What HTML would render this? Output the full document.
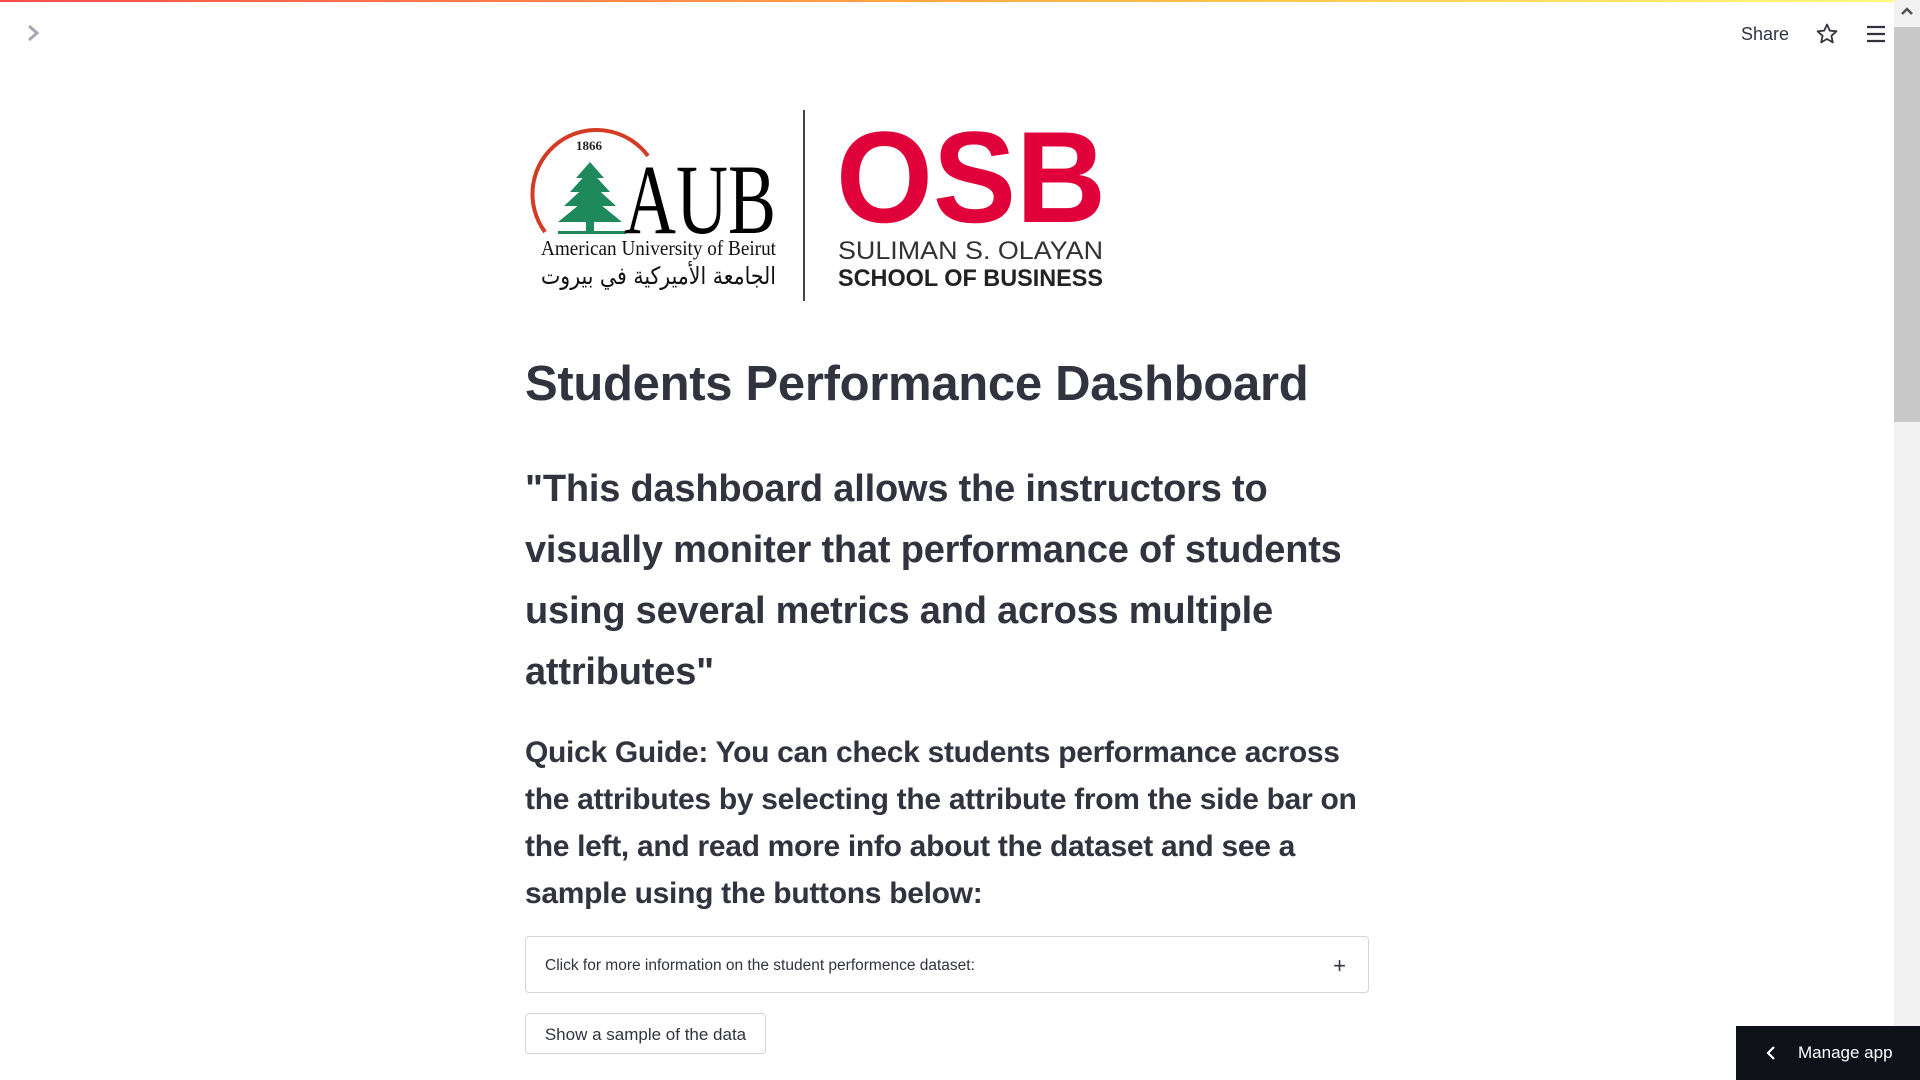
<!DOCTYPE html>
<html><head><meta charset="utf-8"><style>
*{margin:0;padding:0;box-sizing:border-box}
html,body{width:1920px;height:1080px;overflow:hidden;background:#fff;font-family:"Liberation Sans","DejaVu Sans",sans-serif;color:#31333f}
.topbar{position:absolute;left:0;top:0;width:1920px;height:2px;background:linear-gradient(90deg,#ff4b4b,#ffbd45 60%,#fffd80)}
.abs{position:absolute}
h1{position:absolute;left:525px;top:356px;font-size:49px;font-weight:700;letter-spacing:-0.3px;white-space:nowrap;color:#31333f}
.q{position:absolute;left:525px;top:459px;width:860px;font-size:38px;font-weight:700;line-height:61px;color:#31333f;letter-spacing:-0.2px}
.g{position:absolute;left:525px;top:729px;width:845px;font-size:30px;font-weight:700;line-height:47px;color:#31333f;letter-spacing:-0.3px}
.exp{position:absolute;left:525px;top:936px;width:844px;height:57px;border:1px solid #d6d6d9;border-radius:4px;font-size:15.5px;padding:0 19px;line-height:57px}
.exp span{position:absolute;right:22px;top:0;font-size:22px}
.btn{position:absolute;left:525px;top:1013px;width:241px;height:41px;border:1px solid #d6d6d9;border-radius:4px;font-size:17px;line-height:41px;text-align:center}
.manage{position:absolute;left:1736px;top:1026px;width:184px;height:54px;background:#0e1117;color:#fff;font-size:17px;line-height:54px;padding-left:62px}
</style></head><body>
<div class="topbar"></div>
<svg class="abs" style="left:25px;top:24px" width="16" height="18" viewBox="0 0 16 18"><path d="M4 2l8 7-8 7" fill="none" stroke="#a3a8b4" stroke-width="3"/></svg>
<div class="abs" style="left:1741px;top:24px;font-size:18px;color:#31333f">Share</div>
<svg class="abs" style="left:1815px;top:22px" width="24" height="24" viewBox="0 0 24 24"><path d="M12 2.5l2.8 6.1 6.6.7-5 4.5 1.4 6.6L12 17l-5.8 3.4 1.4-6.6-5-4.5 6.6-.7z" fill="none" stroke="#31333f" stroke-width="1.8" stroke-linejoin="round"/></svg>
<svg class="abs" style="left:1866px;top:25px" width="20" height="18" viewBox="0 0 20 18"><path d="M1 2h18M1 9h18M1 16h18" stroke="#31333f" stroke-width="2.2"/></svg>
<div class="abs" style="left:1894px;top:0;width:26px;height:1080px;background:#f1f1f1"></div>
<div class="abs" style="left:1894px;top:27px;width:26px;height:395px;background:#c8c8c8"></div>
<svg class="abs" style="left:1900px;top:6px" width="14" height="10" viewBox="0 0 14 10"><path d="M2 8l5-5 5 5" fill="none" stroke="#505050" stroke-width="2.5"/></svg>

<svg class="abs" style="left:520px;top:105px" width="600" height="200" viewBox="520 105 600 200">
<path d="M545 232 A64 64 0 1 1 648 156" fill="none" stroke="#d23b24" stroke-width="4"/>
<text x="589" y="150" font-family="Liberation Serif,serif" font-weight="700" font-size="13" text-anchor="middle" fill="#222">1866</text>
<g fill="#1e8a5c">
<polygon points="590,162 604,178 576,178"/>
<polygon points="590,170 610,192 570,192"/>
<polygon points="590,182 616,206 564,206"/>
<polygon points="590,196 622,222 558,222"/>
<rect x="586" y="215" width="8" height="18"/>
<rect x="558" y="231" width="68" height="3"/>
</g>
<text x="624" y="233" font-family="Liberation Serif,serif" font-size="100" fill="#000" textLength="152" lengthAdjust="spacingAndGlyphs">AUB</text>
<text x="541" y="255" font-family="Liberation Serif,serif" font-size="21" fill="#111" textLength="235" lengthAdjust="spacingAndGlyphs">American University of Beirut</text>
<text x="541" y="284" font-family="DejaVu Sans,sans-serif" font-size="24" fill="#111" textLength="235" lengthAdjust="spacingAndGlyphs">الجامعة الأميركية في بيروت</text>
<rect x="803" y="110" width="2" height="191" fill="#444"/>
<text x="836" y="222" font-family="Liberation Sans,sans-serif" font-weight="700" font-size="130" fill="#e0003a" textLength="270" lengthAdjust="spacingAndGlyphs">OSB</text>
<text x="838" y="259" font-family="Liberation Sans,sans-serif" font-size="25" fill="#333" textLength="265" lengthAdjust="spacingAndGlyphs">SULIMAN S. OLAYAN</text>
<text x="838" y="286" font-family="Liberation Sans,sans-serif" font-weight="700" font-size="24" fill="#222" textLength="265" lengthAdjust="spacingAndGlyphs">SCHOOL OF BUSINESS</text>
</svg>

<h1>Students Performance Dashboard</h1>
<div class="q">"This dashboard allows the instructors to visually moniter that performance of students using several metrics and across multiple attributes"</div>
<div class="g">Quick Guide: You can check students performance across the attributes by selecting the attribute from the side bar on the left, and read more info about the dataset and see a sample using the buttons below:</div>
<div class="exp">Click for more information on the student performence dataset:<span>+</span></div>
<div class="btn">Show a sample of the data</div>
<div class="manage"><svg class="abs" style="left:30px;top:20px" width="10" height="14" viewBox="0 0 10 14"><path d="M8 1L2 7l6 6" fill="none" stroke="#fff" stroke-width="2.2"/></svg>Manage app</div>
</body></html>
